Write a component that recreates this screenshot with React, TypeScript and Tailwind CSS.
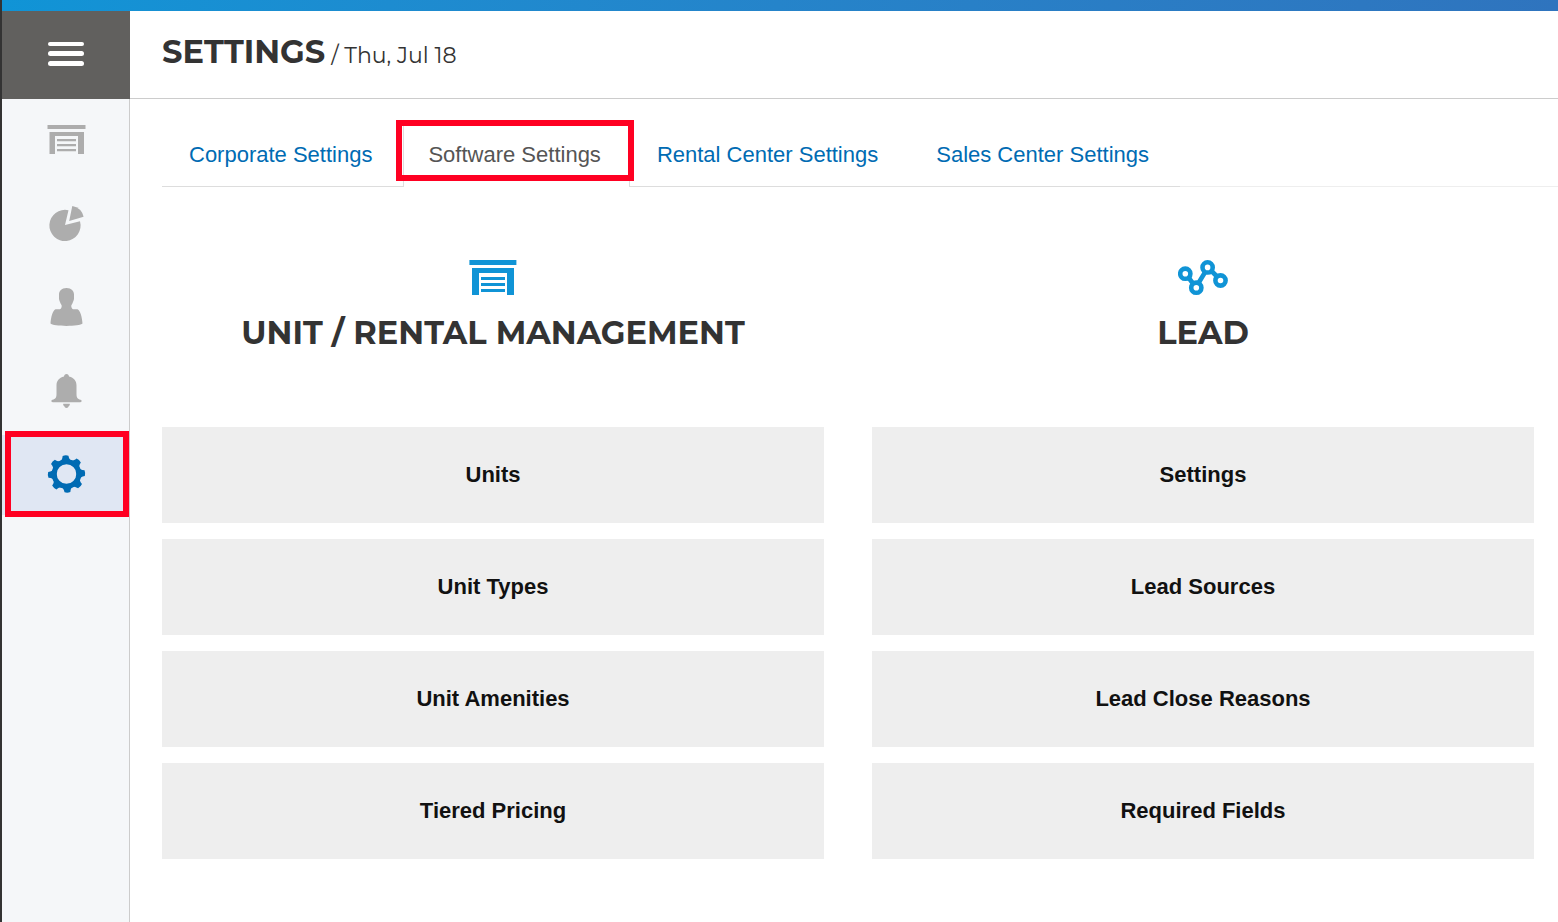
import type { ReactNode } from "react";

function MenuIcon() {
  return (
    <svg width="36" height="26" viewBox="0 0 36 26" fill="#fff" aria-hidden="true">
      <rect x="0" y="1" width="36" height="4" rx="2" />
      <rect x="0" y="10" width="36" height="5" rx="2.5" />
      <rect x="0" y="20" width="36" height="5" rx="2.5" />
    </svg>
  );
}

function SideIcon({ children }: { children: ReactNode }) {
  return (
    <svg width="40" height="40" viewBox="0 0 40 40" fill="currentColor" aria-hidden="true">
      {children}
    </svg>
  );
}

function StorageIcon() {
  return (
    <SideIcon>
      <path d="M1.500 6h38v4h-38zM3.500 13H38v22h-6V17H9v18H3.500z" />
      <path d="M11 20h19v2.200H11zM11 25h19v2.200H11zM11 30h19v2.200H11z" />
    </SideIcon>
  );
}

function PieIcon() {
  return (
    <SideIcon>
      <path d="M19 22 22.500 7.200A15.600 15.600 0 1 0 34 18.200Z" />
      <path d="M23.200 17.900 26.300 3.100A14.500 14.500 0 0 1 37.600 13.800Z" />
    </SideIcon>
  );
}

function PersonIcon() {
  return (
    <SideIcon>
      <path d="M20.500 1C15.500 1 13 4 13 7.500V11.500C13 13.500 14 14.500 14.600 16.500C15.500 18 16 18.500 15.600 20C15.200 21.500 14.500 22.300 13 22.300H9.500C6.500 24 5 30 4.500 36.500C7 39.700 34 39.700 36.500 36.500C36 30 34.500 24 31.500 22.300H28C26.500 22.300 25.800 21.500 25.400 20C25 18.500 25.500 18 26.400 16.500C27 14.500 28 13.500 28 11.500V7.500C28 4 25.500 1 20.500 1Z" />
    </SideIcon>
  );
}

function BellIcon() {
  return (
    <SideIcon>
      <path d="M20.500 3C19 3 18.200 4 18 5.500C13 6.700 10.500 10 10.500 14.500V23C10.500 26.500 9.500 28 6.500 28.800C4.800 29.300 5 31.200 6.700 31.200H34.300C36 31.200 36.200 29.300 34.500 28.800C31.500 28 30.500 26.500 30.500 23V14.500C30.500 10 28 6.700 23 5.500C22.800 4 22 3 20.500 3Z" />
      <path d="M17.200 32.800H23.800C24 34 23.500 34.800 22.800 35C22.300 37.600 18.700 37.600 18.200 35C17.500 34.800 17 34 17.200 32.800Z" />
    </SideIcon>
  );
}

function GearIcon() {
  const angles = [-3, 42, 87, 132, 177, 222, 267, 312];
  return (
    <SideIcon>
      <circle cx="20.500" cy="19" r="12.300" fill="none" stroke="currentColor" strokeWidth="5" />
      {angles.map((a) => (
        <path
          key={a}
          transform={`rotate(${a} 20.500 19)`}
          d="M13 7C16 6 17.200 4 17.600 .8Q20.500 -.2 23.400 .8C23.800 4 25 6 28 7L24 9h-7Z"
        />
      ))}
    </SideIcon>
  );
}

function UnitIcon() {
  return (
    <svg width="48" height="36" viewBox="0 0 48 36" fill="#1094d6" aria-hidden="true">
      <path d="M.4 0h47v5H.400zM3 8h42v27h-7V13H10v22H3z" />
      <path d="M12 17h24v3H12zM12 23h24v3H12zM12 29h24v3H12z" />
    </svg>
  );
}

function LeadIcon() {
  return (
    <svg width="50" height="36" viewBox="0 0 50 36" fill="none" stroke="#1094d6" strokeWidth="4.600" aria-hidden="true">
      <path d="m10.500 17.500 4.500 6M20.500 23 27.500 11.500M33 10.500l6 6" />
      <circle cx="7.300" cy="13.700" r="5.100" />
      <circle cx="18.300" cy="27.700" r="5.100" />
      <circle cx="29.600" cy="7.400" r="5.100" />
      <circle cx="42.500" cy="20.500" r="5.100" />
    </svg>
  );
}

const sideItems = [
  { label: "Units", icon: <StorageIcon /> },
  { label: "Reports", icon: <PieIcon /> },
  { label: "Customers", icon: <PersonIcon /> },
  { label: "Notifications", icon: <BellIcon /> },
];

const tabs = [
  { label: "Corporate Settings", active: false },
  { label: "Software Settings", active: true },
  { label: "Rental Center Settings", active: false },
  { label: "Sales Center Settings", active: false },
];

const sections = [
  {
    title: "UNIT / RENTAL MANAGEMENT",
    icon: <UnitIcon />,
    items: ["Units", "Unit Types", "Unit Amenities", "Tiered Pricing"],
  },
  {
    title: "LEAD",
    icon: <LeadIcon />,
    items: ["Settings", "Lead Sources", "Lead Close Reasons", "Required Fields"],
  },
];

function Sidebar() {
  return (
    <aside className="flex w-32 shrink-0 flex-col bg-[#f5f7f9]">
      <button type="button" aria-label="Menu" className="flex h-[88px] items-center justify-center bg-[#61605e] pb-0.5">
        <MenuIcon />
      </button>
      <nav aria-label="Main" className="flex grow flex-col border-r border-[#cccccc]">
        {sideItems.map((item) => (
          <button
            key={item.label}
            type="button"
            aria-label={item.label}
            className="flex h-[84px] items-center justify-center pb-1 pl-px text-[#adadad]"
          >
            {item.icon}
          </button>
        ))}
        <button
          type="button"
          aria-label="Settings"
          aria-current="page"
          className="relative flex h-20 items-center justify-center bg-[#e0e7f3] pl-px text-[#006bb3]"
        >
          <GearIcon />
          <span className="absolute -top-1 -bottom-0.5 left-[3px] right-0 border-6 border-[#ff0022]" />
        </button>
      </nav>
    </aside>
  );
}

function Tabs() {
  return (
    <div role="tablist" className="flex items-end">
      {tabs.map((tab) => (
        <div
          key={tab.label}
          className={
            tab.active
              ? "relative flex h-[65px] border-x border-t border-[#dddddd]"
              : "flex h-[65px] border-b border-[#dddddd] px-px pt-0.5"
          }
        >
          <button
            type="button"
            role="tab"
            aria-selected={tab.active}
            className={
              tab.active
                ? "pr-7 pb-px pl-6 text-[22px] leading-8 whitespace-nowrap text-[#555555]"
                : "pr-[30px] pb-px pl-[26px] text-[22px] leading-8 whitespace-nowrap text-[#006bb3]"
            }
          >
            {tab.label}
          </button>
          {tab.active && (
            <span className="pointer-events-none absolute -top-[3px] -right-[5px] bottom-1.5 -left-2 border-6 border-[#ff0022]" />
          )}
        </div>
      ))}
      <div className="grow border-b border-[#eeeeee]" />
    </div>
  );
}

export default function App() {
  return (
    <div className="flex min-h-screen flex-col border-l-2 border-[#333333] bg-white font-['Liberation_Sans',Arial,sans-serif]">
      <div className="h-[11px] bg-linear-to-r from-[#1094d6] to-[#2f74be]" />
      <div className="flex grow">
        <Sidebar />
        <main className="min-w-0 grow">
          <header className="flex h-[88px] items-baseline gap-1.5 border-b border-[#cccccc] pt-[21px] pl-8 font-['Montserrat',Inter,sans-serif] text-[#333333]">
            <h1 className="text-[32px] leading-10 font-bold">SETTINGS</h1>
            <p className="text-[22px] leading-10">/ Thu, Jul 18</p>
          </header>
          <div className="pt-[23px] pl-8">
            <Tabs />
            <div className="grid grid-cols-2 gap-12 pt-[73px] pr-6">
              {sections.map((section) => (
                <section key={section.title} className="flex flex-col items-center">
                  {section.icon}
                  <h2 className="mt-[17px] font-['Montserrat',Inter,sans-serif] text-[32px] leading-10 font-bold whitespace-nowrap text-[#333333]">
                    {section.title}
                  </h2>
                  <div className="mt-[74px] flex w-full flex-col gap-4">
                    {section.items.map((label) => (
                      <button
                        key={label}
                        type="button"
                        className="h-24 bg-[#eeeeee] pb-0.5 text-[22px] font-bold text-[#111111]"
                      >
                        {label}
                      </button>
                    ))}
                  </div>
                </section>
              ))}
            </div>
          </div>
        </main>
      </div>
    </div>
  );
}
